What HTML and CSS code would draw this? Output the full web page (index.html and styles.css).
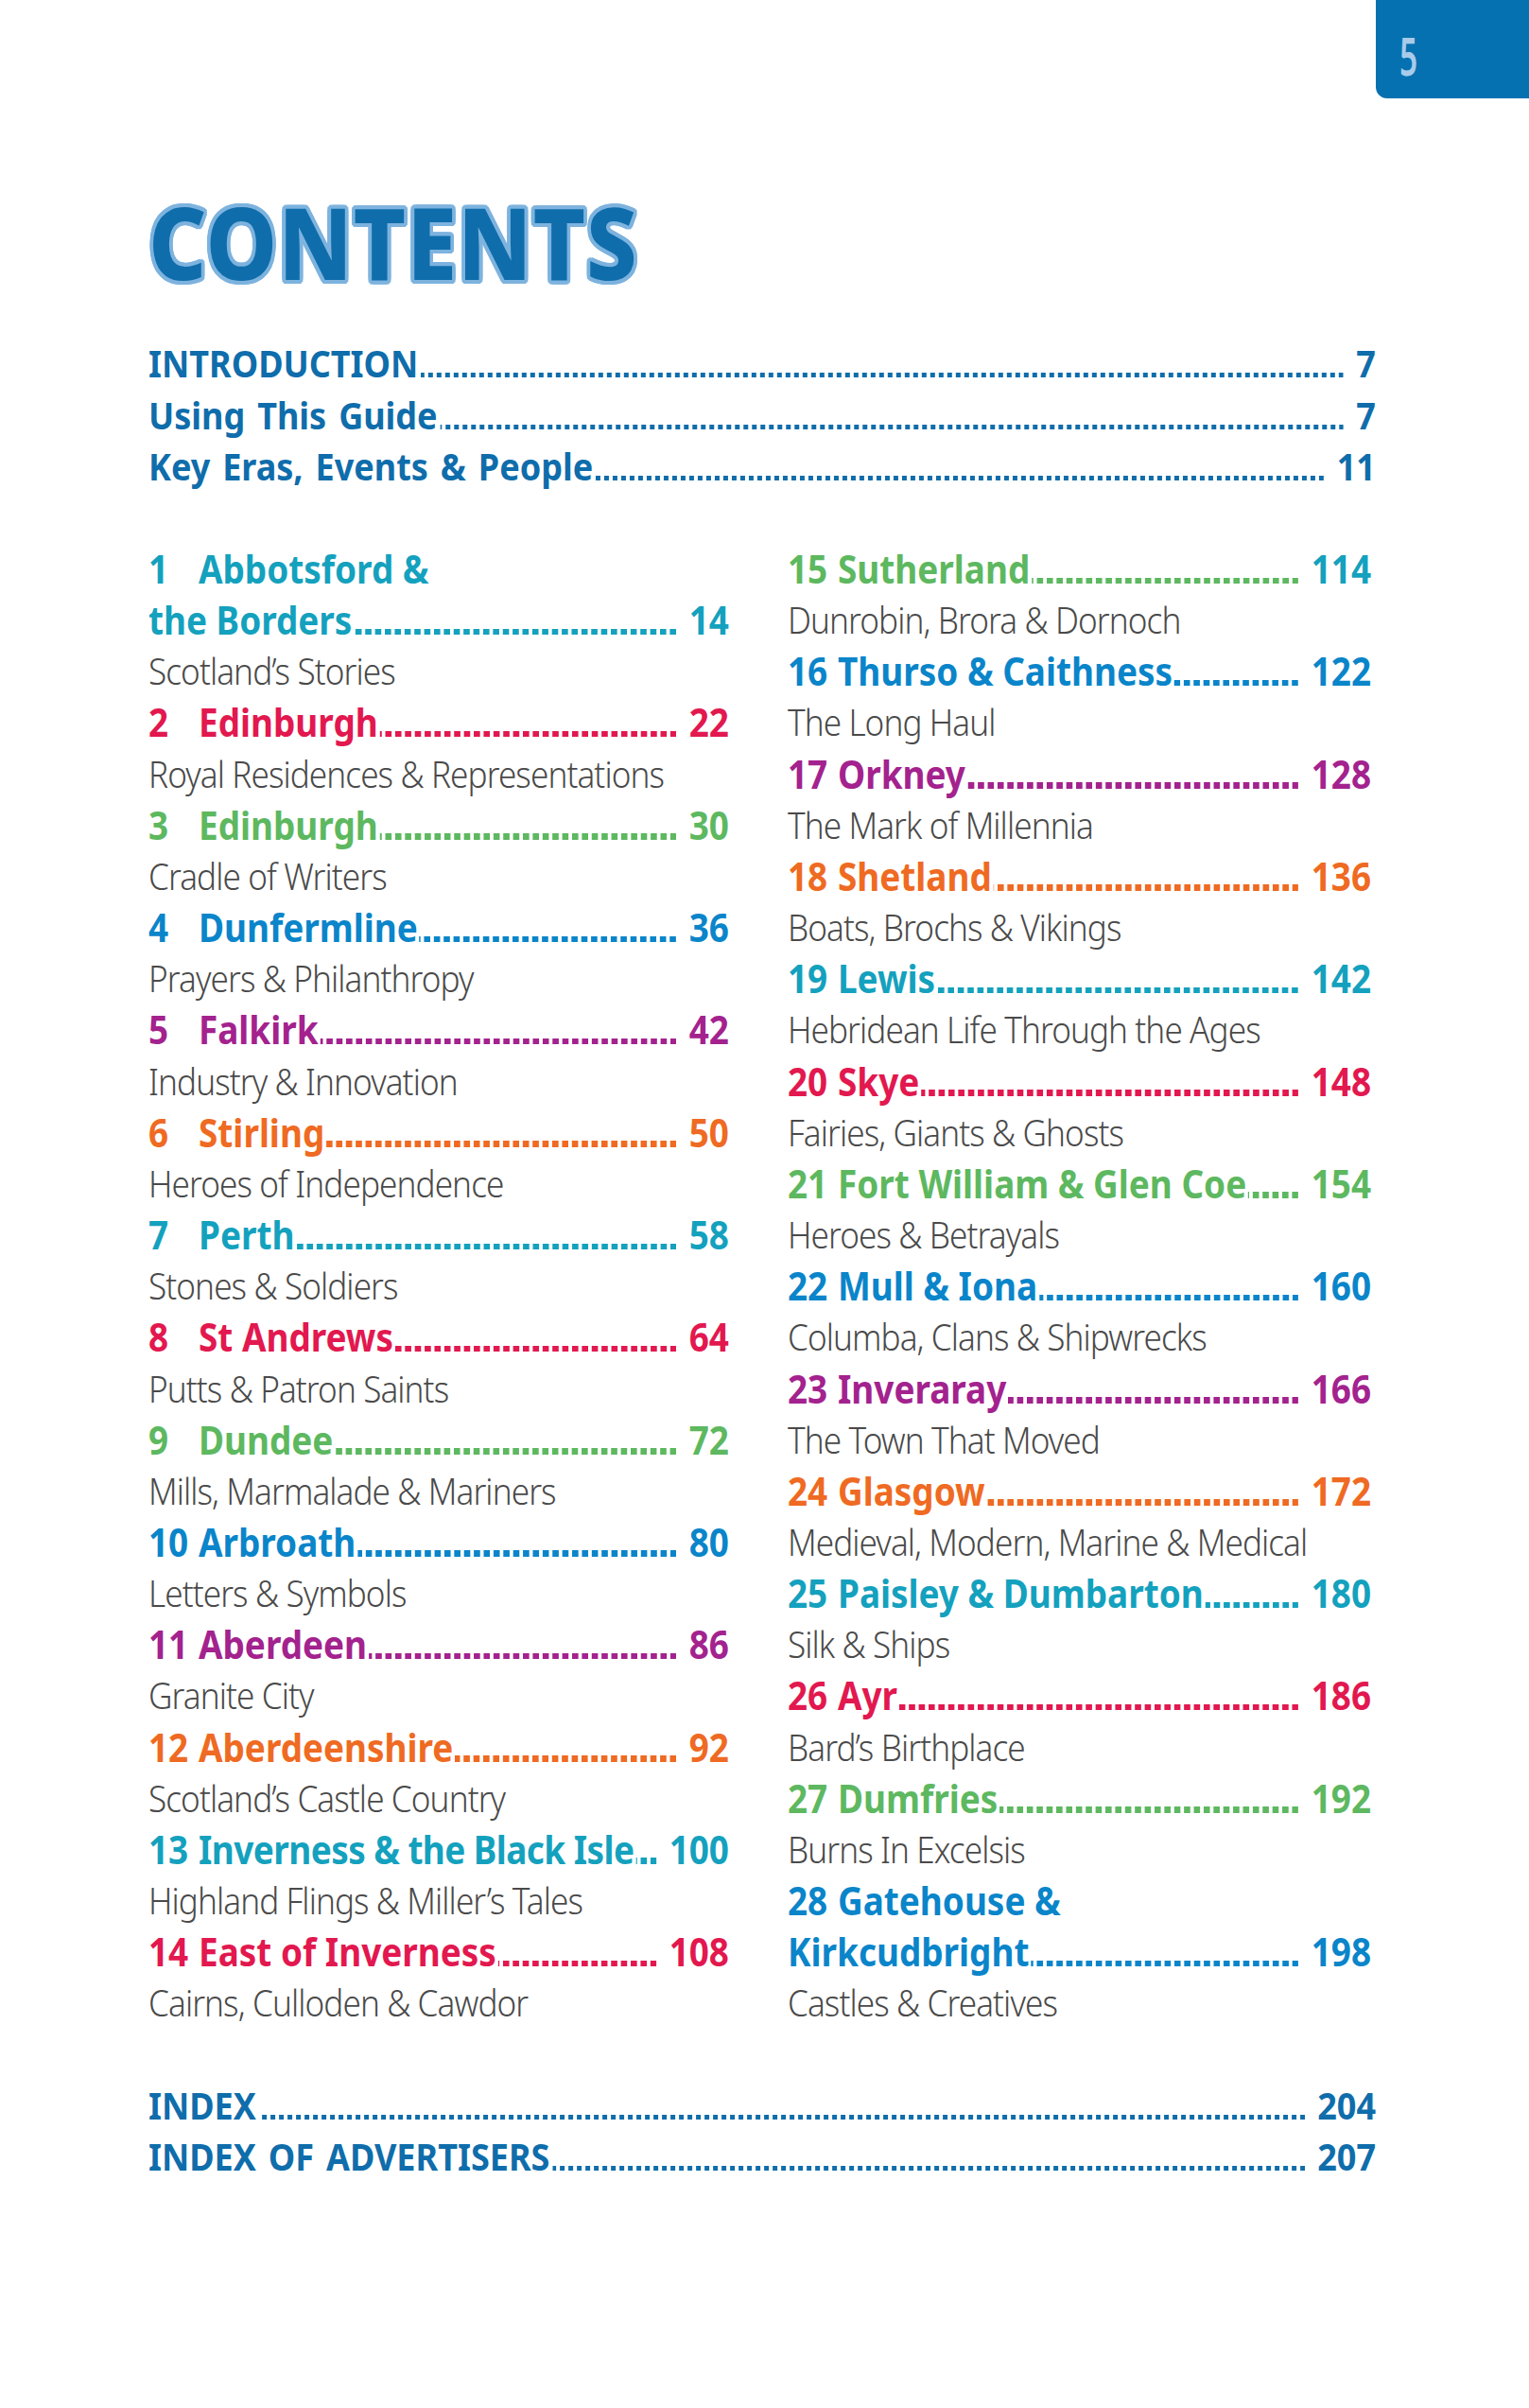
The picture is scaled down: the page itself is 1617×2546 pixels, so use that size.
FILE: index.html
```html
<!DOCTYPE html>
<html lang="en">
<head>
<meta charset="utf-8">
<title>Contents</title>
<link rel="stylesheet" href="styles.css">
</head>
<body>
<div class="page">
  <div class="tabbar"><div class="tab"><span class="tab-num">5</span></div></div>
  <h1 class="title">CONTENTS</h1>

  <div class="toc">
    <div class="front">
      <div class="row"><span class="t">INTRODUCTION</span><span class="dots"></span><span class="pg">7</span></div>
      <div class="row"><span class="t">Using This Guide</span><span class="dots"></span><span class="pg">7</span></div>
      <div class="row"><span class="t">Key Eras, Events &amp; People</span><span class="dots"></span><span class="pg">11</span></div>
    </div>

    <div class="cols">
      <div class="col">
        <div class="row chap teal"><span class="no">1</span><span class="t">Abbotsford &amp;</span></div>
        <div class="row chap teal"><span class="t">the Borders</span><span class="dots"></span><span class="pg">14</span></div>
        <div class="sub">Scotland’s Stories</div>
        <div class="row chap red"><span class="no">2</span><span class="t">Edinburgh</span><span class="dots"></span><span class="pg">22</span></div>
        <div class="sub">Royal Residences &amp; Representations</div>
        <div class="row chap green"><span class="no">3</span><span class="t">Edinburgh</span><span class="dots"></span><span class="pg">30</span></div>
        <div class="sub">Cradle of Writers</div>
        <div class="row chap blue"><span class="no">4</span><span class="t">Dunfermline</span><span class="dots"></span><span class="pg">36</span></div>
        <div class="sub">Prayers &amp; Philanthropy</div>
        <div class="row chap purple"><span class="no">5</span><span class="t">Falkirk</span><span class="dots"></span><span class="pg">42</span></div>
        <div class="sub">Industry &amp; Innovation</div>
        <div class="row chap orange"><span class="no">6</span><span class="t">Stirling</span><span class="dots"></span><span class="pg">50</span></div>
        <div class="sub">Heroes of Independence</div>
        <div class="row chap teal"><span class="no">7</span><span class="t">Perth</span><span class="dots"></span><span class="pg">58</span></div>
        <div class="sub">Stones &amp; Soldiers</div>
        <div class="row chap red"><span class="no">8</span><span class="t">St Andrews</span><span class="dots"></span><span class="pg">64</span></div>
        <div class="sub">Putts &amp; Patron Saints</div>
        <div class="row chap green"><span class="no">9</span><span class="t">Dundee</span><span class="dots"></span><span class="pg">72</span></div>
        <div class="sub">Mills, Marmalade &amp; Mariners</div>
        <div class="row chap blue"><span class="no">10</span><span class="t">Arbroath</span><span class="dots"></span><span class="pg">80</span></div>
        <div class="sub">Letters &amp; Symbols</div>
        <div class="row chap purple"><span class="no">11</span><span class="t">Aberdeen</span><span class="dots"></span><span class="pg">86</span></div>
        <div class="sub">Granite City</div>
        <div class="row chap orange"><span class="no">12</span><span class="t">Aberdeenshire</span><span class="dots"></span><span class="pg">92</span></div>
        <div class="sub">Scotland’s Castle Country</div>
        <div class="row chap teal"><span class="no">13</span><span class="t tight">Inverness &amp; the Black Isle</span><span class="dots"></span><span class="pg">100</span></div>
        <div class="sub">Highland Flings &amp; Miller’s Tales</div>
        <div class="row chap red"><span class="no">14</span><span class="t">East of Inverness</span><span class="dots"></span><span class="pg">108</span></div>
        <div class="sub">Cairns, Culloden &amp; Cawdor</div>
      </div>

      <div class="col">
        <div class="row chap green"><span class="no">15</span><span class="t">Sutherland</span><span class="dots"></span><span class="pg teal">114</span></div>
        <div class="sub">Dunrobin, Brora &amp; Dornoch</div>
        <div class="row chap blue"><span class="no">16</span><span class="t">Thurso &amp; Caithness</span><span class="dots"></span><span class="pg">122</span></div>
        <div class="sub">The Long Haul</div>
        <div class="row chap purple"><span class="no">17</span><span class="t">Orkney</span><span class="dots"></span><span class="pg">128</span></div>
        <div class="sub">The Mark of Millennia</div>
        <div class="row chap orange"><span class="no">18</span><span class="t">Shetland</span><span class="dots"></span><span class="pg">136</span></div>
        <div class="sub">Boats, Brochs &amp; Vikings</div>
        <div class="row chap teal"><span class="no">19</span><span class="t">Lewis</span><span class="dots"></span><span class="pg">142</span></div>
        <div class="sub">Hebridean Life Through the Ages</div>
        <div class="row chap red"><span class="no">20</span><span class="t">Skye</span><span class="dots"></span><span class="pg">148</span></div>
        <div class="sub">Fairies, Giants &amp; Ghosts</div>
        <div class="row chap green"><span class="no">21</span><span class="t">Fort William &amp; Glen Coe</span><span class="dots"></span><span class="pg">154</span></div>
        <div class="sub">Heroes &amp; Betrayals</div>
        <div class="row chap blue"><span class="no">22</span><span class="t">Mull &amp; Iona</span><span class="dots"></span><span class="pg">160</span></div>
        <div class="sub">Columba, Clans &amp; Shipwrecks</div>
        <div class="row chap purple"><span class="no">23</span><span class="t">Inveraray</span><span class="dots"></span><span class="pg">166</span></div>
        <div class="sub">The Town That Moved</div>
        <div class="row chap orange"><span class="no">24</span><span class="t">Glasgow</span><span class="dots"></span><span class="pg">172</span></div>
        <div class="sub">Medieval, Modern, Marine &amp; Medical</div>
        <div class="row chap teal"><span class="no">25</span><span class="t">Paisley &amp; Dumbarton</span><span class="dots"></span><span class="pg">180</span></div>
        <div class="sub">Silk &amp; Ships</div>
        <div class="row chap red"><span class="no">26</span><span class="t">Ayr</span><span class="dots"></span><span class="pg">186</span></div>
        <div class="sub">Bard’s Birthplace</div>
        <div class="row chap green"><span class="no">27</span><span class="t">Dumfries</span><span class="dots"></span><span class="pg">192</span></div>
        <div class="sub">Burns In Excelsis</div>
        <div class="row chap blue"><span class="no">28</span><span class="t">Gatehouse &amp;</span></div>
        <div class="row chap blue"><span class="t">Kirkcudbright</span><span class="dots"></span><span class="pg">198</span></div>
        <div class="sub">Castles &amp; Creatives</div>
      </div>
    </div>

    <div class="back">
      <div class="row"><span class="t">INDEX</span><span class="dots"></span><span class="pg">204</span></div>
      <div class="row"><span class="t">INDEX OF ADVERTISERS</span><span class="dots"></span><span class="pg">207</span></div>
    </div>
  </div>
</div>
</body>
</html>
```

FILE: styles.css
```css
html, body {
  margin: 0;
  padding: 0;
  background: #ffffff;
}

.page {
  width: 1617px;
  min-height: 2546px;
  box-sizing: border-box;
  padding-left: 157px;
  font-family: "Noto Sans", "Open Sans", sans-serif;
}

/* page tab */
.tabbar {
  display: flex;
  justify-content: flex-end;
}

.tab {
  width: 162px;
  height: 104px;
  box-sizing: border-box;
  padding: 30px 0 0 25px;
  background: #0671b0;
  border-bottom-left-radius: 12px;
}

.tab-num {
  display: inline-block;
  font-size: 56px;
  line-height: 56px;
  font-weight: 600;
  color: #a9cbea;
  transform: scaleX(0.6);
  transform-origin: 0 0;
}

/* title */
.title {
  margin: 98px 0 0;
  font-size: 106px;
  line-height: 106px;
  font-weight: 800;
  letter-spacing: 1px;
  color: #0f6dab;
  transform: scaleX(0.9);
  transform-origin: 0 0;
  text-shadow:
    4px 0 0 #7db3de, -4px 0 0 #7db3de, 0 4px 0 #7db3de, 0 -4px 0 #7db3de,
    3px 3px 0 #7db3de, -3px 3px 0 #7db3de, 3px -3px 0 #7db3de, -3px -3px 0 #7db3de,
    4px 2px 0 #7db3de, 2px 4px 0 #7db3de, -4px 2px 0 #7db3de, -2px 4px 0 #7db3de,
    4px -2px 0 #7db3de, 2px -4px 0 #7db3de, -4px -2px 0 #7db3de, -2px -4px 0 #7db3de;
}

/* the whole listing is set in a condensed measure: laid out wide, then narrowed */
.toc {
  width: 1442.2px;
  margin-top: 49.4px;
  transform: scaleX(0.9);
  transform-origin: 0 0;
}

/* generic rows */
.row {
  display: flex;
  align-items: baseline;
  height: 54.17px;
  line-height: 54.17px;
  white-space: nowrap;
}

.t, .pg, .no {
  flex: none;
}

.tight {
  letter-spacing: -0.6px;
}

.dots {
  flex: 1;
  height: 5px;
  margin: 0 15px 0 3px;
  background-image: linear-gradient(to right, transparent 0 4.4px, currentColor 4.4px);
  background-size: 10px 5px;
  background-repeat: repeat-x;
  background-position: right bottom;
}

/* front & back matter */
.front,
.back {
  color: #0f6dab;
  font-size: 40px;
  font-weight: 700;
  word-spacing: 4px;
}

.back {
  margin-top: 54.17px;
}

/* chapter columns */
.cols {
  display: grid;
  grid-template-columns: 682.2px 685.6px;
  column-gap: 68.9px;
  margin-top: 54.17px;
}

.chap {
  font-size: 41px;
  font-weight: 700;
}

.chap .dots {
  height: 6.5px;
  margin-left: 2px;
  background-image: linear-gradient(to right, transparent 0 4.4px, currentColor 4.4px);
  background-size: 11.56px 6.5px;
}

.no {
  min-width: 58.9px;
}

.sub {
  height: 54.17px;
  line-height: 54.17px;
  font-size: 39px;
  font-weight: 300;
  letter-spacing: -1px;
  color: #4a4a4a;
  white-space: nowrap;
}

/* chapter colours */
.teal   { color: #14a1be; }
.red    { color: #e2184f; }
.green  { color: #5db860; }
.blue   { color: #0a85ca; }
.purple { color: #a3228e; }
.orange { color: #ef6a22; }
```
